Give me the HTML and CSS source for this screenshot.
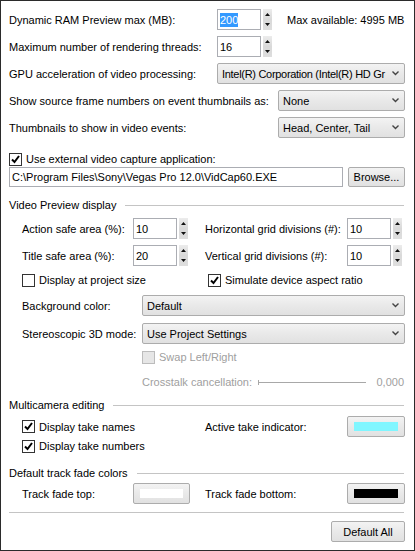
FILE: index.html
```html
<!DOCTYPE html>
<html lang="en">
<head>
    <meta charset="UTF-8" />
    <title>Preferences - Video</title>
    <link rel="stylesheet" href="styles.css">
</head>
<body>

<div class="dialog">

    <div class="row first">
        <span class="lbl main">Dynamic RAM Preview max (MB):</span>
        <div class="spin">
            <span class="field"><span class="hl">200</span></span>
            <span class="arrows"><svg width="9" height="21"><path d="M2 7h5L4.5 4z M2 14h5l-2.5 3z" fill="#111"/></svg></span>
        </div>
        <span class="note">Max available: 4995 MB</span>
    </div>

    <div class="row">
        <span class="lbl main">Maximum number of rendering threads:</span>
        <div class="spin">
            <span class="field">16</span>
            <span class="arrows"><svg width="9" height="21"><path d="M2 7h5L4.5 4z M2 14h5l-2.5 3z" fill="#111"/></svg></span>
        </div>
    </div>

    <div class="row">
        <span class="lbl main">GPU acceleration of video processing:</span>
        <div class="combo grow">
            <span class="txt tight">Intel(R) Corporation (Intel(R) HD Gr</span>
            <svg class="chev" width="7" height="5"><path d="M0.5 0.5l3 3 3-3" fill="none" stroke="#444" stroke-width="1.4"/></svg>
        </div>
    </div>

    <div class="row">
        <span class="lbl wide">Show source frame numbers on event thumbnails as:</span>
        <div class="combo grow">
            <span class="txt">None</span>
            <svg class="chev" width="7" height="5"><path d="M0.5 0.5l3 3 3-3" fill="none" stroke="#444" stroke-width="1.4"/></svg>
        </div>
    </div>

    <div class="row">
        <span class="lbl wide">Thumbnails to show in video events:</span>
        <div class="combo grow">
            <span class="txt">Head, Center, Tail</span>
            <svg class="chev" width="7" height="5"><path d="M0.5 0.5l3 3 3-3" fill="none" stroke="#444" stroke-width="1.4"/></svg>
        </div>
    </div>

    <div class="row capture">
        <label class="check">
            <span class="box"><svg width="11" height="11"><path d="M2 5.5l2.5 2.5 4.5-6" fill="none" stroke="#000" stroke-width="2"/></svg></span>
            Use external video capture application:
        </label>
    </div>

    <div class="row path">
        <span class="field long">C:\Program Files\Sony\Vegas Pro 12.0\VidCap60.EXE</span>
        <span class="btn browse">Browse...</span>
    </div>

    <div class="group preview">Video Preview display</div>

    <div class="sub">
        <div class="row action">
            <div class="half">
                <span class="lbl col">Action safe area (%):</span>
                <div class="spin">
                    <span class="field">10</span>
                    <span class="arrows"><svg width="9" height="21"><path d="M2 7h5L4.5 4z M2 14h5l-2.5 3z" fill="#111"/></svg></span>
                </div>
            </div>
            <span class="lbl col-r">Horizontal grid divisions (#):</span>
            <div class="spin">
                <span class="field">10</span>
                <span class="arrows"><svg width="9" height="21"><path d="M2 7h5L4.5 4z M2 14h5l-2.5 3z" fill="#111"/></svg></span>
            </div>
        </div>

        <div class="row">
            <div class="half">
                <span class="lbl col">Title safe area (%):</span>
                <div class="spin">
                    <span class="field">20</span>
                    <span class="arrows"><svg width="9" height="21"><path d="M2 7h5L4.5 4z M2 14h5l-2.5 3z" fill="#111"/></svg></span>
                </div>
            </div>
            <span class="lbl col-r">Vertical grid divisions (#):</span>
            <div class="spin">
                <span class="field">10</span>
                <span class="arrows"><svg width="9" height="21"><path d="M2 7h5L4.5 4z M2 14h5l-2.5 3z" fill="#111"/></svg></span>
            </div>
        </div>

        <div class="row short">
            <div class="half">
                <label class="check"><span class="box"></span>Display at project size</label>
            </div>
            <label class="check right">
                <span class="box"><svg width="11" height="11"><path d="M2 5.5l2.5 2.5 4.5-6" fill="none" stroke="#000" stroke-width="2"/></svg></span>
                Simulate device aspect ratio
            </label>
        </div>

        <div class="row">
            <span class="lbl pick">Background color:</span>
            <div class="combo grow">
                <span class="txt">Default</span>
                <svg class="chev" width="7" height="5"><path d="M0.5 0.5l3 3 3-3" fill="none" stroke="#444" stroke-width="1.4"/></svg>
            </div>
        </div>

        <div class="row stereo">
            <span class="lbl pick">Stereoscopic 3D mode:</span>
            <div class="combo grow">
                <span class="txt">Use Project Settings</span>
                <svg class="chev" width="7" height="5"><path d="M0.5 0.5l3 3 3-3" fill="none" stroke="#444" stroke-width="1.4"/></svg>
            </div>
        </div>

        <div class="row short swap">
            <label class="check off"><span class="box"></span>Swap Left/Right</label>
        </div>

        <div class="row short crosstalk off">
            <span class="lbl talk">Crosstalk cancellation:</span>
            <svg class="slider" width="108" height="5"><path d="M0.5 0v5M0 2.5h108" stroke="#a8a8a8"/></svg>
            <span class="value">0,000</span>
        </div>
    </div>

    <div class="group multi">Multicamera editing</div>

    <div class="sub">
        <div class="row takes">
            <div class="half">
                <label class="check">
                    <span class="box"><svg width="11" height="11"><path d="M2 5.5l2.5 2.5 4.5-6" fill="none" stroke="#000" stroke-width="2"/></svg></span>
                    Display take names
                </label>
            </div>
            <span class="lbl col-r">Active take indicator:</span>
            <span class="btn color"><span class="swatch cyan"></span></span>
        </div>

        <div class="row short numbers">
            <label class="check">
                <span class="box"><svg width="11" height="11"><path d="M2 5.5l2.5 2.5 4.5-6" fill="none" stroke="#000" stroke-width="2"/></svg></span>
                Display take numbers
            </label>
        </div>
    </div>

    <div class="group fade">Default track fade colors</div>

    <div class="sub">
        <div class="row fades">
            <div class="half">
                <span class="lbl col">Track fade top:</span>
                <span class="btn color"><span class="swatch white"></span></span>
            </div>
            <span class="lbl col-r">Track fade bottom:</span>
            <span class="btn color"><span class="swatch black"></span></span>
        </div>
    </div>

    <div class="sep"></div>

    <div class="footer">
        <span class="btn reset">Default All</span>
    </div>

</div>

</body>
</html>
```

FILE: styles.css
```css
body {
    margin: 0;
    background: #fff;
}
.dialog {
    width: 415px;
    height: 551px;
    box-sizing: border-box;
    border: 1px solid #2b2b2b;
    padding: 8px 9px 0 8px;
    background: #fff;
    font-family: "Liberation Sans", Arial, sans-serif;
    font-size: 11px;
    color: #000;
    overflow: hidden;
}

.row {
    display: flex;
    align-items: center;
    height: 21px;
    margin-top: 6px;
}
.row.first {
    margin-top: 0;
}
.row.short {
    height: 18px;
    margin-top: 5px;
}
.row.capture {
    height: 16px;
    margin-top: 13px;
}
.row.path {
    height: 20px;
    margin-top: 0;
}
.row.action {
    margin-top: 4px;
}
.row.stereo {
    margin-top: 7px;
}
.row.swap {
    margin-top: 4px;
    padding-left: 120px;
}
.row.crosstalk {
    margin-top: 7px;
    padding-left: 120px;
}
.row.takes {
    margin-top: 2px;
}
.row.numbers {
    margin-top: 0;
}
.row.fades {
    margin-top: 1px;
}

.lbl {
    flex: none;
    white-space: nowrap;
}
.lbl.main { width: 208px; }
.lbl.wide { width: 269px; }
.lbl.col { width: 111px; }
.lbl.col-r { width: 142px; }
.lbl.pick { width: 120px; }
.lbl.talk { width: 116px; }

.sub {
    padding-left: 13px;
}
.half {
    display: flex;
    align-items: center;
    width: 183px;
    flex: none;
}

/* spin boxes */
.spin {
    display: flex;
    gap: 2px;
    height: 21px;
}
.field {
    box-sizing: border-box;
    width: 44px;
    height: 21px;
    border: 1px solid #abadb3;
    background: #fff;
    padding: 0 2px;
    display: flex;
    align-items: center;
    white-space: nowrap;
    overflow: hidden;
}
.field.long {
    width: 335px;
    height: 20px;
}
.hl {
    background: #3399ff;
    color: #fff;
    padding: 1px 0;
}
.arrows {
    width: 9px;
    height: 21px;
    background: linear-gradient(#ececec, #d9d9d9 50%, #dedede);
}
.arrows svg {
    display: block;
}
.note {
    margin-left: 15px;
    white-space: nowrap;
}

/* combo boxes and buttons */
.combo, .btn {
    box-sizing: border-box;
    height: 21px;
    border: 1px solid #acacac;
    border-radius: 2px;
    background: linear-gradient(#f3f3f3, #e9e9e9 50%, #e1e1e1);
    display: flex;
    align-items: center;
}
.combo {
    padding-left: 4px;
}
.combo.grow {
    flex: 1;
    min-width: 0;
}
.txt {
    flex: 1;
    white-space: nowrap;
    overflow: hidden;
}
.txt.tight {
    letter-spacing: -0.3px;
}
.chev {
    flex: none;
    margin: 0 5px 0 4px;
}
.btn {
    justify-content: center;
    flex: none;
}
.btn.browse {
    width: 57px;
    height: 20px;
    margin-left: 5px;
}
.btn.color {
    width: 58px;
    padding: 5px 6px;
}
.half .btn.color {
    width: 57px;
}
.swatch {
    flex: 1;
    align-self: stretch;
}
.swatch.cyan { background: #80f6ff; }
.swatch.white { background: #fff; }
.swatch.black { background: #000; }

/* check boxes */
.check {
    display: flex;
    align-items: center;
    gap: 4px;
    white-space: nowrap;
}
.check.right {
    margin-left: 3px;
}
.box {
    box-sizing: border-box;
    width: 13px;
    height: 13px;
    border: 1px solid #333;
    background: #fff;
    display: flex;
    align-items: center;
    justify-content: center;
}
.box svg {
    display: block;
}
.off {
    color: #a0a0a0;
}
.off .box {
    border-color: #bcbcbc;
    background: #e6e6e6;
}

.slider {
    flex: none;
}
.value {
    flex: 1;
    text-align: right;
    padding-right: 1px;
}

/* group headers */
.group {
    display: flex;
    align-items: center;
    height: 18px;
    white-space: nowrap;
}
.group::after {
    content: "";
    flex: 1;
    height: 1px;
    background: #c4c4c4;
    margin: 0 1px 0 9px;
}
.group.preview { margin-top: 9px; }
.group.multi { margin-top: 5px; }
.group.fade { margin-top: 9px; }

.sep {
    height: 1px;
    background: #c4c4c4;
    margin: 8px 1px 0 0;
}
.footer {
    display: flex;
    justify-content: flex-end;
    margin-top: 8px;
}
.btn.reset {
    width: 74px;
}
```
